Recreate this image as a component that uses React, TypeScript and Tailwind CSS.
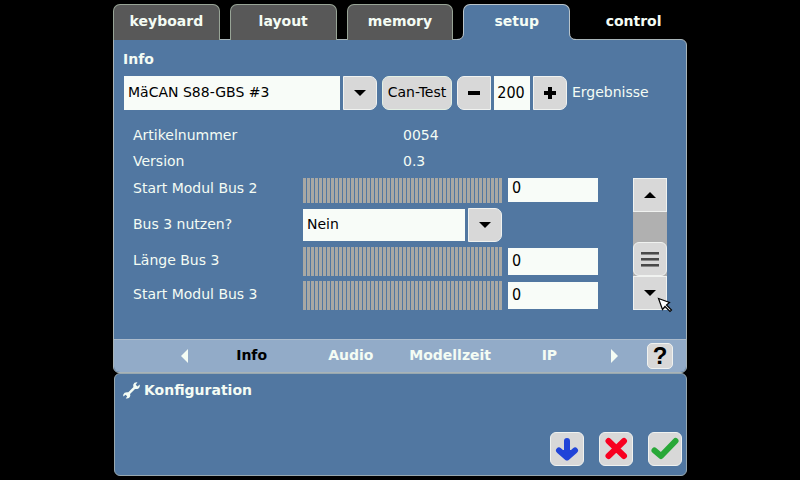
import React, { useId, useState } from "react";

const iconButton =
  "flex h-[34px] w-[34px] shrink-0 items-center justify-center border border-[#f0f2f0] bg-[#d8d8d8] text-black";

function Triangle({ dir }: { dir: "up" | "down" | "left" | "right" }) {
  if (dir === "up" || dir === "down") {
    return (
      <svg width="12" height="6" viewBox="0 0 12 6" aria-hidden="true">
        <path d={dir === "up" ? "M0 6 6 0l6 6z" : "M0 0h12L6 6z"} fill="currentColor" />
      </svg>
    );
  }
  return (
    <svg width="7" height="14" viewBox="0 0 7 14" aria-hidden="true">
      <path d={dir === "left" ? "M7 0v14L0 7z" : "M0 0v14l7-7z"} fill="currentColor" />
    </svg>
  );
}

function TopTabs() {
  const [active, setActive] = useState("setup");
  const tabs = ["keyboard", "layout", "memory", "setup", "control"];
  return (
    <nav className="grid grid-cols-5 gap-[10px] pt-1">
      {tabs.map((tab) => {
        const look =
          tab === active
            ? "z-10 rounded-t-[7px] border-[#b9c4ca] bg-[#5177a1]"
            : tab === "control"
              ? "border-transparent"
              : "rounded-t-[7px] border-[#98a496] bg-[#585858]";
        return (
          <button
            key={tab}
            type="button"
            onClick={() => setActive(tab)}
            className={`relative h-9 border-x border-t pb-1 text-sm leading-5 font-bold ${look}`}
          >
            {tab}
            {tab === active && (
              <>
                <svg className="absolute bottom-0 -left-[7px]" width="7" height="7" viewBox="0 0 7 7" aria-hidden="true">
                  <path d="M7 0v7H0Q6.500 6.500 6.500 0z" fill="#5177a1" />
                  <path d="M6.500 0Q6.500 6.500 0 6.500" fill="none" stroke="#b9c4ca" />
                </svg>
                <svg className="absolute -right-[7px] bottom-0" width="7" height="7" viewBox="0 0 7 7" aria-hidden="true">
                  <path d="M0 0v7h7Q.5 6.500 .5 0z" fill="#5177a1" />
                  <path d="M.5 0Q.5 6.500 7 6.500" fill="none" stroke="#b9c4ca" />
                </svg>
              </>
            )}
          </button>
        );
      })}
    </nav>
  );
}

function DropDown({ label, id, options, grow }: { label: string; id?: string; options: string[]; grow: string }) {
  return (
    <div className="flex items-center gap-[3px]">
      <select
        id={id}
        aria-label={id ? undefined : label}
        className={`appearance-none bg-[#f8fcf8] pb-[2px] pl-1 text-sm leading-5 text-black outline-none ${grow}`}
      >
        {options.map((o) => (
          <option key={o}>{o}</option>
        ))}
      </select>
      <button type="button" aria-label={`${label} öffnen`} className={`${iconButton} rounded-r-[7px]`}>
        <Triangle dir="down" />
      </button>
    </div>
  );
}

function SliderRow({ label, text, bar, field }: { label: string; text: string; bar: string; field: string }) {
  const id = useId();
  const [value, setValue] = useState("0");
  return (
    <div className="flex items-start">
      <label htmlFor={id} className={`w-[170px] shrink-0 ${text}`}>
        {label}
      </label>
      <input
        type="range"
        min={0}
        max={128}
        value={Number(value) || 0}
        onChange={(e) => setValue(e.target.value)}
        aria-label={`${label} Regler`}
        className={`w-[199px] shrink-0 appearance-none bg-[repeating-linear-gradient(to_right,#a8a8a4_0px,#a8a8a4_3px,transparent_3px,transparent_4px)] [&::-webkit-slider-thumb]:appearance-none ${bar}`}
      />
      <input
        id={id}
        type="text"
        value={value}
        onChange={(e) => setValue(e.target.value)}
        className={`ml-[6px] w-[90px] shrink-0 bg-[#f8fcf8] pl-1 font-['DejaVu_Sans_Condensed','DejaVu_Sans',sans-serif] text-base text-black outline-none ${field}`}
      />
    </div>
  );
}

function Scroller() {
  return (
    <div className="relative ml-[35px] flex w-[34px] shrink-0 flex-col self-start bg-[#b0b0b0]">
      <button type="button" aria-label="Nach oben" className={iconButton}>
        <Triangle dir="up" />
      </button>
      <button type="button" aria-label="Position" className={`${iconButton} mt-[30px] rounded-[6px]`}>
        <svg width="18" height="15" viewBox="0 0 18 15" aria-hidden="true">
          <path d="M0 1h18M0 7h18M0 13h18" stroke="#484848" strokeWidth="2" />
          <path d="M0 2.500h18M0 8.500h18M0 14.500h18" stroke="#888" />
        </svg>
      </button>
      <button type="button" aria-label="Nach unten" className={iconButton}>
        <Triangle dir="down" />
      </button>
      <svg className="pointer-events-none absolute -right-[6px] -bottom-[3px]" width="16" height="16" viewBox="0 0 16 16" aria-hidden="true">
        <path d="M1.500 1.500 12.500 5.500 9.500 8 14.500 13 13 14.500 8 9.500 5.500 12.500z" fill="#fff" stroke="#000" strokeWidth="1.200" />
      </svg>
    </div>
  );
}

function InfoPage() {
  const [count, setCount] = useState(200);
  const busId = useId();
  return (
    <section className="h-[299px] pt-[9px] pl-[9px]">
      <h1 className="text-sm leading-5 font-bold">Info</h1>
      <div className="mt-[7px] flex items-center pl-px">
        <DropDown label="Gerät" options={["MäCAN S88-GBS #3"]} grow="h-[34px] w-[216px]" />
        <button
          type="button"
          className="ml-[5px] h-[34px] w-[70px] shrink-0 rounded-[7px] border border-[#e4f0e4] bg-[#d8d8d8] pb-[2px] text-sm leading-5 whitespace-nowrap text-black"
        >
          Can-Test
        </button>
        <div className="ml-[5px] flex gap-[3px]">
          <button type="button" aria-label="Weniger" onClick={() => setCount(count - 1)} className={`${iconButton} rounded-l-[7px]`}>
            <svg width="12" height="12" viewBox="0 0 12 12" aria-hidden="true">
              <path d="M0 6h12" stroke="currentColor" strokeWidth="4" />
            </svg>
          </button>
          <input
            type="text"
            aria-label="Anzahl"
            value={count}
            onChange={(e) => setCount(Number(e.target.value) || 0)}
            className="h-[34px] w-9 bg-[#f8fcf8] pr-[2px] pb-[2px] text-center font-['DejaVu_Sans_Condensed','DejaVu_Sans',sans-serif] text-base text-black outline-none"
          />
          <button type="button" aria-label="Mehr" onClick={() => setCount(count + 1)} className={`${iconButton} rounded-r-[7px]`}>
            <svg width="12" height="12" viewBox="0 0 12 12" aria-hidden="true">
              <path d="M0 6h12M6 0v12" stroke="currentColor" strokeWidth="4" />
            </svg>
          </button>
        </div>
        <span className="ml-[5px] pb-[2px]">Ergebnisse</span>
      </div>

      <dl className="mt-[15px] grid grid-cols-[270px_1fr] gap-y-[6px] pl-[10px]">
        <dt>Artikelnummer</dt>
        <dd>0054</dd>
        <dt>Version</dt>
        <dd>0.3</dd>
      </dl>

      <div className="mt-[7px] flex pl-[10px]">
        <div className="flex flex-col gap-[5px]">
          <SliderRow label="Start Modul Bus 2" text="pt-0" bar="h-[25px]" field="h-6 pb-[4px]" />
          <div className="flex items-center">
            <label htmlFor={busId} className="w-[170px] shrink-0 pb-[2px]">
              Bus 3 nutzen?
            </label>
            <DropDown label="Bus 3 nutzen?" id={busId} options={["Nein", "Ja"]} grow="h-8 w-[162px]" />
          </div>
          <SliderRow label="Länge Bus 3" text="pt-[3px]" bar="h-[29px]" field="mt-px h-[27px] pb-[2px]" />
          <SliderRow label="Start Modul Bus 3" text="pt-[3px]" bar="h-[29px]" field="mt-px h-[27px] pb-[2px]" />
        </div>
        <Scroller />
      </div>
    </section>
  );
}

function PageBar() {
  const [page, setPage] = useState("Info");
  return (
    <div className="flex h-[33px] items-center rounded-b-[6px] border-t border-[#acbccd] bg-[#92abc8] pr-[13px]">
      <button type="button" aria-label="Zurück" className="ml-[67px]">
        <Triangle dir="left" />
      </button>
      <div className="mx-[13px] grid flex-1 grid-cols-4">
        {["Info", "Audio", "Modellzeit", "IP"].map((p) => (
          <button
            key={p}
            type="button"
            onClick={() => setPage(p)}
            className={`pb-[2px] pl-[2px] text-sm leading-5 font-bold ${p === page ? "text-black" : ""}`}
          >
            {p}
          </button>
        ))}
      </div>
      <button type="button" aria-label="Weiter">
        <Triangle dir="right" />
      </button>
      <button
        type="button"
        aria-label="Hilfe"
        className="ml-[29px] flex h-[26px] w-[26px] items-center justify-center rounded-[5px] border border-[#f0f2f0] bg-[#d8d8d8] pb-px font-['Liberation_Sans',sans-serif] text-2xl leading-6 font-bold text-black"
      >
        ?
      </button>
    </div>
  );
}

function ConfigPanel() {
  return (
    <section className="ml-px flex flex-1 flex-col justify-between rounded-[6px] border border-[#98a8b0] bg-[#5177a1] pt-[6px] pr-1 pb-[9px] pl-2">
      <h2 className="flex items-center gap-1 text-sm leading-5 font-bold">
        <svg width="17" height="17" viewBox="0 0 17 17" aria-hidden="true">
          <path
            d="M14.500.3Q11 0 10.300 2.500 10 4 10.500 5L5.300 10.300Q1.500 9.500.3 12.500q-.3 1.200.2 2L2.500 12.800l1.700 1.500L2.800 16.500Q6.800 17 7.300 13.500q0-.8-.3-1.500L12 7Q16 7.500 16.800 4.200q.1-1-.2-1.700L14.500 4.500 12.700 2.800z"
            fill="currentColor"
          />
        </svg>
        Konfiguration
      </h2>
      <div className="flex justify-end gap-[15px]">
        <button type="button" aria-label="Herunterladen" className={`${iconButton} rounded-[6px]`}>
          <svg width="24" height="24" viewBox="0 0 24 24" aria-hidden="true">
            <path d="M12 4v15M4 13.500l8 7 8-7" fill="none" stroke="#2044d8" strokeWidth="6" strokeLinecap="round" strokeLinejoin="round" />
            <path d="M7 14h10l-5 5z" fill="#2044d8" stroke="#2044d8" strokeWidth="2" />
          </svg>
        </button>
        <button type="button" aria-label="Abbrechen" className={`${iconButton} rounded-[6px]`}>
          <svg width="24" height="24" viewBox="0 0 24 24" aria-hidden="true">
            <path d="M4.500 4 20 19M20 4 4.500 19" stroke="#f80020" strokeWidth="6" strokeLinecap="round" />
          </svg>
        </button>
        <button type="button" aria-label="Übernehmen" className={`${iconButton} rounded-[6px]`}>
          <svg width="28" height="24" viewBox="0 0 28 24" aria-hidden="true">
            <path d="M3.500 13.500 10 19 24.500 4" fill="none" stroke="#28a838" strokeWidth="6" strokeLinecap="round" strokeLinejoin="round" />
          </svg>
        </button>
      </div>
    </section>
  );
}

export default function App() {
  return (
    <div className="min-h-screen bg-black font-['DejaVu_Sans',sans-serif] text-sm leading-5 text-[#f4fcf4]">
      <main className="mx-auto flex min-h-screen w-full max-w-[574px] flex-col pb-1">
        <TopTabs />
        <div className="-mt-px rounded-tr-[6px] rounded-b-[6px] border border-[#a8b4b8] bg-[#5177a1]">
          <InfoPage />
          <PageBar />
        </div>
        <ConfigPanel />
      </main>
    </div>
  );
}
